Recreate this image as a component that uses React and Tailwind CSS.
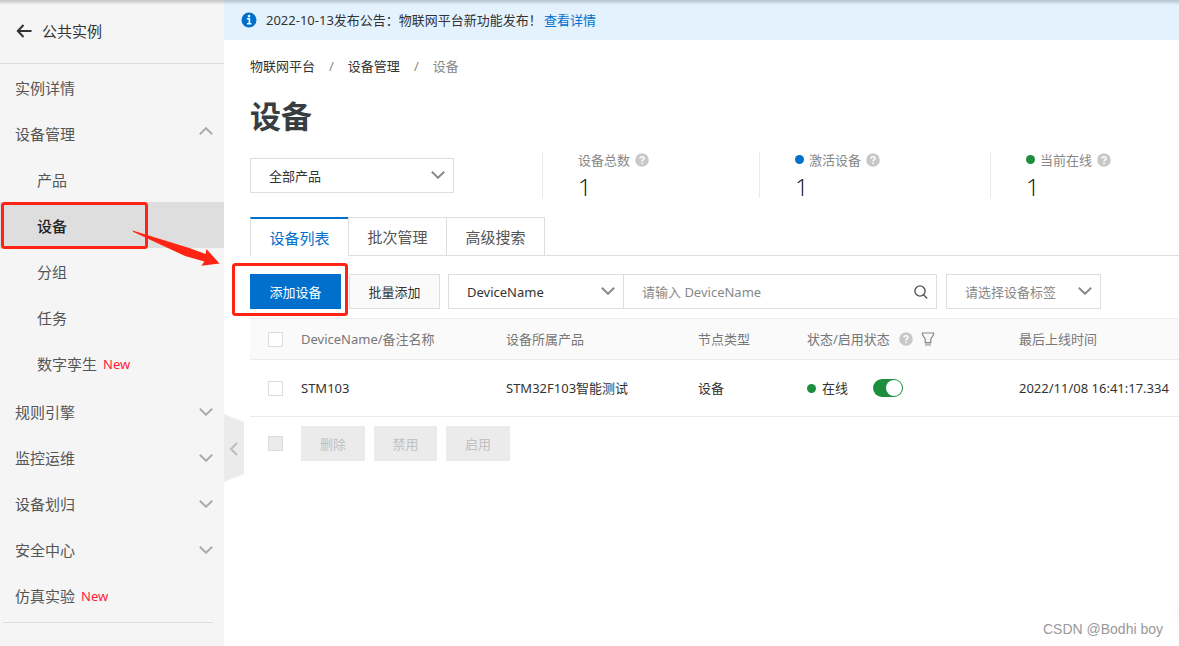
import { useState } from 'react';

const menu = [
  { label: '实例详情' },
  { label: '设备管理', open: true, children: [
    { label: '产品' },
    { label: '设备', active: true },
    { label: '分组' },
    { label: '任务' },
    { label: '数字孪生', isNew: true },
  ] },
  { label: '规则引擎', open: false },
  { label: '监控运维', open: false },
  { label: '设备划归', open: false },
  { label: '安全中心', open: false },
  { label: '仿真实验', isNew: true },
];

const stats = [
  { label: '设备总数', value: 1 },
  { label: '激活设备', value: 1, dot: 'bg-[#0070cc]' },
  { label: '当前在线', value: 1, dot: 'bg-[#1e8e3e]' },
];

const devices = [
  { name: 'STM103', product: 'STM32F103智能测试', type: '设备', status: '在线', lastOnline: '2022/11/08 16:41:17.334' },
];

const Chevron = ({ className = '' }) => (
  <svg viewBox="0 0 14 8" className={`h-2 w-3.5 shrink-0 ${className}`} fill="none" stroke="currentColor" strokeWidth="1.9" aria-hidden="true">
    <path d="M0.8 0.8 L7 6.8 L13.2 0.8" />
  </svg>
);

const Help = () => (
  <svg viewBox="0 0 14 14" className="h-3.5 w-3.5 shrink-0" aria-hidden="true">
    <circle cx="7" cy="7" r="6.8" fill="#c8c8c8" />
    <path d="M5 5.6 C5 3 9 3 9 5.5 C9 6.8 7 6.9 7 8.4" fill="none" stroke="#fff" strokeWidth="1.5" />
    <circle cx="7" cy="10.3" r="0.9" fill="#fff" />
  </svg>
);

const MenuItem = ({ item, sub }) => (
  <li>
    <a
      href="#"
      className={`flex h-[46px] items-center pt-0.5 pr-[11px] text-[15px] ${sub ? 'pl-[37px]' : 'pl-[15px]'} ${item.active ? 'bg-[#dedede] font-medium text-[#222]' : 'text-[#555]'}`}
    >
      <span>{item.label}</span>
      {item.isNew && <span className="ml-1.5 text-[13px] text-[#ff1a3c]">New</span>}
      {item.open !== undefined && (
        <Chevron className={`ml-auto text-[#aaa] ${item.open ? 'mb-1.5 rotate-180' : ''}`} />
      )}
    </a>
    {item.children && (
      <ul className="pb-0.5">
        {item.children.map((child) => <MenuItem key={child.label} item={child} sub />)}
      </ul>
    )}
  </li>
);

const Sidebar = () => (
  <aside className="relative w-56 shrink-0 bg-[#f5f5f5]">
    <a href="#" className="flex h-16 items-center border-b border-[#dedede] pb-0.5 pl-4 text-[15px] text-[#333]">
      <svg viewBox="0 0 16 14" className="mr-2.5 h-3.5 w-4" fill="none" stroke="#333" strokeWidth="2" aria-hidden="true">
        <path d="M7.5 1 L1.8 7 L7.5 13 M2 7 H15.5" />
      </svg>
      公共实例
    </a>
    <nav>
      <ul>
        {menu.map((item) => <MenuItem key={item.label} item={item} />)}
      </ul>
    </nav>
    <hr className="mr-[11px] ml-[3px] mt-1 border-[#dcdcdc]" />
    <button type="button" aria-label="收起菜单" className="absolute left-full top-[414px] h-[68px] w-5">
      <svg viewBox="0 0 20 68" className="h-full w-full" aria-hidden="true">
        <path d="M0 0 L20 8 V60 L0 68 Z" fill="#ebebeb" />
        <path d="M13 29 L7 35 L13 41" fill="none" stroke="#bbb" strokeWidth="1.8" />
      </svg>
    </button>
  </aside>
);

const Select = ({ label, options, className = '' }) => (
  <div className={`relative h-[35px] ${className}`}>
    <select aria-label={label} className="h-full w-full appearance-none border border-[#dedede] bg-white pl-[18px] pr-8 outline-none">
      {options.map((option) => <option key={option}>{option}</option>)}
    </select>
    <Chevron className="pointer-events-none absolute right-[9px] top-[13px] text-[#888]" />
  </div>
);

const Checkbox = ({ label, disabled }) => (
  <input
    type="checkbox"
    aria-label={label}
    disabled={disabled}
    className="block h-[15px] w-[15px] appearance-none border border-[#dcdcdc] bg-white checked:bg-[#0070cc] disabled:bg-[#ebebeb]"
  />
);

const Switch = () => {
  const [on, setOn] = useState(true);
  return (
    <button
      type="button"
      role="switch"
      aria-checked={on}
      aria-label="启用状态"
      onClick={() => setOn(!on)}
      className={`ml-[25px] flex h-[18px] w-[30px] items-center rounded-full p-px ${on ? 'justify-end bg-[#1e8e3e]' : 'justify-start bg-[#ccc]'}`}
    >
      <span className="h-4 w-4 rounded-full bg-white" />
    </button>
  );
};

const Stats = () => (
  <dl className="ml-[88px] flex">
    {stats.map((stat) => (
      <div key={stat.label} className="h-[46px] border-l border-[#ebebeb] pl-[35px] pr-[110px]">
        <dt className="flex h-[15px] items-center gap-[5px] whitespace-nowrap text-[#888]">
          {stat.dot && <span className={`h-[9px] w-[9px] rounded-full ${stat.dot}`} />}
          {stat.label}
          <Help />
        </dt>
        <dd className="mt-1 font-['Open_Sans',sans-serif] text-2xl font-light leading-8 text-[#111]">{stat.value}</dd>
      </div>
    ))}
  </dl>
);

const Tabs = () => (
  <div role="tablist" className="mt-[19px] flex h-[39px] text-[15px] text-[#555]">
    <button type="button" role="tab" aria-selected="true" className="w-[98px] border-l border-t-2 border-l-[#dedede] border-t-[#0070cc] text-[#0070cc]">设备列表</button>
    <button type="button" role="tab" aria-selected="false" className="w-[98px] border-y border-l border-[#dedede]">批次管理</button>
    <button type="button" role="tab" aria-selected="false" className="w-[99px] border border-[#dedede]">高级搜索</button>
    <div className="flex-1 border-b border-[#dedede]" />
  </div>
);

const Toolbar = () => (
  <div className="mt-[18px] flex h-[35px]">
    <button type="button" className="w-[91px] bg-[#0070cc] text-white">添加设备</button>
    <button type="button" className="ml-2 w-[91px] border border-[#dedede] bg-[#fafafa]">批量添加</button>
    <Select label="搜索字段" options={['DeviceName']} className="ml-2 w-44" />
    <div className="relative -ml-px w-[314px]">
      <input type="text" aria-label="DeviceName" placeholder="请输入 DeviceName" className="h-full w-full border border-[#dedede] pl-[18px] pr-9 outline-none placeholder:text-[#888]" />
      <svg viewBox="0 0 14 14" className="absolute right-[9px] top-[11px] h-3.5 w-3.5" fill="none" stroke="#555" strokeWidth="1.4" aria-hidden="true">
        <circle cx="6" cy="6" r="5.1" />
        <path d="M9.6 9.8 L13.2 13.4" />
      </svg>
    </div>
    <Select label="设备标签" options={['请选择设备标签']} className="ml-[9px] w-[155px] text-[#888]" />
  </div>
);

const DeviceTable = () => (
  <table className="mt-[9px] w-full table-fixed border-separate border-spacing-0 text-left">
    <thead>
      <tr className="text-[#777] *:h-[42px] *:border-y *:border-[#ebebeb] *:bg-[#fafafa] *:pl-[18px] *:font-normal">
        <th className="w-[33px]"><Checkbox label="全选" /></th>
        <th className="w-[205px]">DeviceName/备注名称</th>
        <th className="w-48">设备所属产品</th>
        <th className="w-[109px]">节点类型</th>
        <th className="w-[212px]">
          <span className="flex items-center">
            <span className="mr-[9px]">状态/启用状态</span>
            <Help />
            <svg viewBox="0 0 14 16" className="ml-2 h-4 w-3.5" fill="none" stroke="#888" strokeWidth="1.2" aria-hidden="true">
              <path d="M1.4 2 H12.6 V3.6 L9.8 8 V11.6 H4.2 V8 L1.4 3.6 Z" />
              <path d="M4 13.6 H10" stroke="#bbb" strokeWidth="2.4" />
            </svg>
          </span>
        </th>
        <th>最后上线时间</th>
      </tr>
    </thead>
    <tbody>
      {devices.map((device) => (
        <tr key={device.name} className="*:h-[57px] *:whitespace-nowrap *:border-b *:border-[#ebebeb] *:pl-[18px]">
          <td><Checkbox label={device.name} /></td>
          <td>{device.name}</td>
          <td>{device.product}</td>
          <td>{device.type}</td>
          <td>
            <span className="flex items-center">
              <span className="mr-1.5 h-[9px] w-[9px] rounded-full bg-[#1e8e3e]" />
              {device.status}
              <Switch />
            </span>
          </td>
          <td>{device.lastOnline}</td>
        </tr>
      ))}
    </tbody>
  </table>
);

// Marcas rojas que guían al usuario hasta el botón de alta
const Annotations = () => (
  <svg viewBox="0 0 360 330" className="pointer-events-none absolute left-0 top-0 h-[330px] w-[360px]" aria-hidden="true">
    <g fill="none" stroke="#ff2314" strokeWidth="3">
      <rect x="2.5" y="203.5" width="144" height="44" rx="2" />
      <rect x="233.5" y="264.5" width="113" height="50" rx="2" />
    </g>
    <path d="M132.5 230.6 L190 248.2 L205.6 254 L206.4 249 L219.5 263.4 L201.4 265.8 L204.4 261.6 L185 256 L133 231.8 Z" fill="#ff2314" />
  </svg>
);

const App = () => {
  return (
    <div className="relative flex min-h-screen overflow-hidden bg-white font-['Noto_Sans','Noto_Sans_CJK_SC',sans-serif] text-[13px] leading-5 text-[#333]">
      <Sidebar />
      <main className="min-w-0 flex-1">
        <div className="flex h-10 items-center bg-[#e4f2fe] pl-[17px]">
          <svg viewBox="0 0 16 16" className="mr-[9px] h-4 w-4" aria-hidden="true">
            <circle cx="8" cy="8" r="7.5" fill="#0070cc" />
            <path d="M6 6.8 H8.4 V11.4 M6 11.8 H10.4" fill="none" stroke="#fff" strokeWidth="1.6" />
            <circle cx="8" cy="4.1" r="1.3" fill="#fff" />
          </svg>
          <span className="mr-0.5">2022-10-13发布公告：物联网平台新功能发布！</span>
          <a href="#" className="text-[#0070cc]">查看详情</a>
        </div>
        <div className="pl-[26px]">
          <nav className="flex gap-3.5 pt-4">
            <a href="#">物联网平台</a>
            <span className="text-[#888]">/</span>
            <a href="#">设备管理</a>
            <span className="text-[#888]">/</span>
            <span className="text-[#888]">设备</span>
          </nav>
          <h1 className="mt-5 text-[31px] font-bold leading-10 text-[#373d41]">设备</h1>
          <div className="mt-4 flex">
            <Select label="产品" options={['全部产品']} className="mt-1.5 w-51 shrink-0" />
            <Stats />
          </div>
          <Tabs />
          <Toolbar />
          <DeviceTable />
          <div className="mt-[9px] flex h-[35px] items-center pl-[18px] text-[#c1c1c1]">
            <Checkbox label="批量选择" disabled />
            <div className="ml-[18px] flex h-full gap-[9px]">
              <button type="button" disabled className="w-16 bg-[#ebebeb]">删除</button>
              <button type="button" disabled className="w-[63px] bg-[#ebebeb]">禁用</button>
              <button type="button" disabled className="w-16 bg-[#ebebeb]">启用</button>
            </div>
          </div>
        </div>
      </main>
      <div className="absolute inset-x-0 top-0 h-[5px] bg-linear-to-b from-black/20 to-transparent" />
      <Annotations />
      <div className="absolute -right-10 bottom-6 h-5 w-10 rounded-full shadow-[0_0_8px_rgba(0,0,0,0.08)]" />
      <p className="absolute bottom-2 right-4 font-['Liberation_Sans',sans-serif] text-sm leading-[18px] text-[#999]">CSDN @Bodhi boy</p>
    </div>
  );
};

export default App;
